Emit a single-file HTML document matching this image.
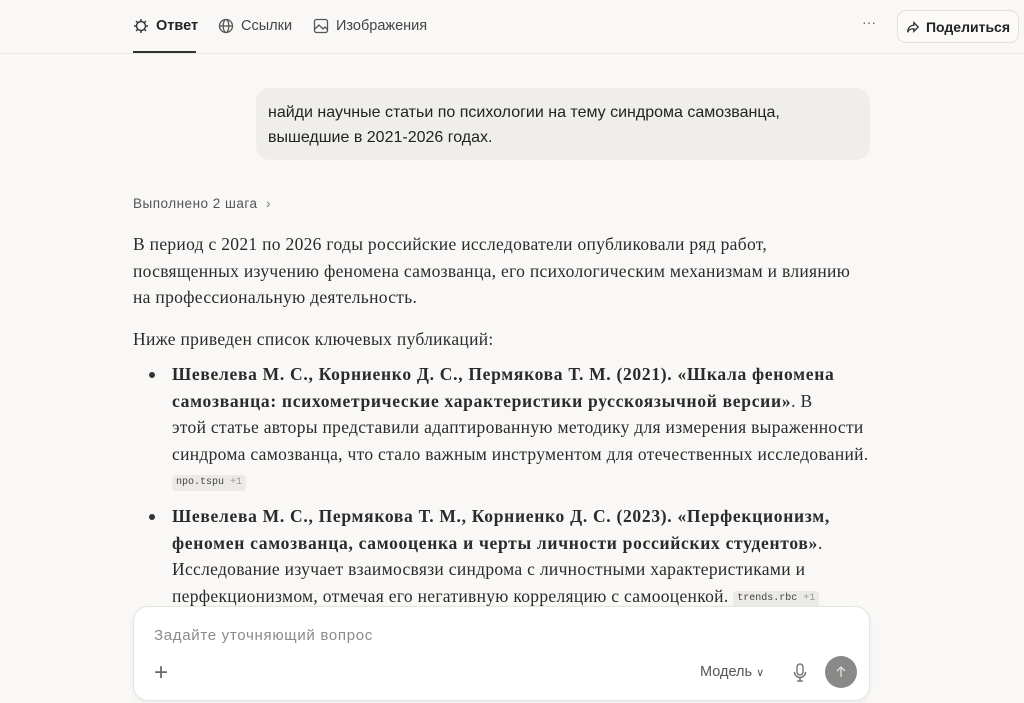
<!DOCTYPE html>
<html><head><meta charset="utf-8"><style>
*{margin:0;padding:0;box-sizing:border-box}
body{width:1024px;height:703px;overflow:hidden;background:#f9f8f6;font-family:"Liberation Sans",sans-serif;color:#222;position:relative}
.top{position:absolute;left:0;top:0;width:1024px;height:54px;border-bottom:1px solid #ebe9e4}
.tab{position:absolute;top:18px;font-size:14.5px;color:#444;display:flex;align-items:center;gap:7px}
.tab svg{width:16px;height:16px}
.ul{position:absolute;left:133px;top:51px;width:63px;height:2px;background:#333}
.share{position:absolute;left:897px;top:10px;width:122px;height:33px;border:1px solid #e2e0db;border-radius:9px;background:#fbfaf8;font-size:14px;font-weight:bold;color:#222;display:flex;align-items:center;justify-content:center;gap:6px}
.bubble{position:absolute;left:256px;top:88px;width:614px;height:72px;background:#efeeea;border-radius:14px;padding:12px 12px;font-size:16px;line-height:25px;color:#222}
.steps{position:absolute;left:133px;top:196px;font-size:13.5px;letter-spacing:0.5px;color:#555}
.txt{position:absolute;left:133px;font-family:"Liberation Serif",serif;font-size:17.5px;letter-spacing:0.3px;line-height:26.5px;color:#2a2a2a;white-space:nowrap}
.li{position:absolute;left:172px;font-family:"Liberation Serif",serif;font-size:17.5px;letter-spacing:0.3px;line-height:26.5px;color:#2a2a2a;white-space:nowrap}
.li b{letter-spacing:0.7px}
.dot{position:absolute;left:149px;width:6px;height:6px;border-radius:50%;background:#333}
.chip{display:inline-block;font-family:"Liberation Mono",monospace;font-size:10px;letter-spacing:0;line-height:16px;padding:0 4px;background:#eceae6;border-radius:4px;color:#444;vertical-align:2px}
.chip span{color:#999}
.input{position:absolute;left:133px;top:606px;width:737px;height:95px;background:#fff;border:1px solid #e6e4df;border-radius:15px;box-shadow:0 2px 6px rgba(0,0,0,.05)}
</style></head><body>
<div class="top">
<div class="tab" style="left:133px;color:#222;font-weight:bold"><svg viewBox="0 0 16 16" fill="none" stroke="#333" stroke-width="1.4"><circle cx="8" cy="8" r="4.5"/><path d="M8 1v3M8 12v3M1 8h3M12 8h3M3 3l2 2M11 11l2 2M13 3l-2 2M3 13l2-2"/></svg>Ответ</div>
<div class="tab" style="left:218px"><svg viewBox="0 0 16 16" fill="none" stroke="#555" stroke-width="1.3"><circle cx="8" cy="8" r="6.5"/><ellipse cx="8" cy="8" rx="2.8" ry="6.5"/><path d="M1.5 8h13"/></svg>Ссылки</div>
<div class="tab" style="left:313px"><svg viewBox="0 0 16 16" fill="none" stroke="#555" stroke-width="1.3"><rect x="1.5" y="1.5" width="13" height="13" rx="2"/><path d="M2 11l4-4 4 4 2-2 2.5 2.5"/></svg>Изображения</div>
<div class="ul"></div>
<div style="position:absolute;left:862px;top:14px;font-size:14px;color:#666">···</div>
<div class="share"><svg width="14" height="14" viewBox="0 0 16 16" fill="none" stroke="#333" stroke-width="1.5"><path d="M9 3l5 5-5 5V10C5 10 3 11 2 14c0-5 3-8 7-8z"/></svg>Поделиться</div>
</div>
<div class="bubble">найди научные статьи по психологии на тему синдрома самозванца,<br>вышедшие в 2021-2026 годах.</div>
<div class="steps">Выполнено 2 шага &nbsp;<span style="color:#777">›</span></div>
<div class="txt" style="top:231px">В период с 2021 по 2026 годы российские исследователи опубликовали ряд работ,<br>посвященных изучению феномена самозванца, его психологическим механизмам и влиянию<br>на профессиональную деятельность.</div>
<div class="txt" style="top:326px">Ниже приведен список ключевых публикаций:</div>
<div class="dot" style="top:372px"></div>
<div class="li" style="top:361px"><b>Шевелева М. С., Корниенко Д. С., Пермякова Т. М. (2021). «Шкала феномена</b><br><b>самозванца: психометрические характеристики русскоязычной версии»</b>. В<br>этой статье авторы представили адаптированную методику для измерения выраженности<br>синдрома самозванца, что стало важным инструментом для отечественных исследований.<br><span class="chip">npo.tspu <span>+1</span></span></div>
<div class="dot" style="top:514px"></div>
<div class="li" style="top:503px"><b>Шевелева М. С., Пермякова Т. М., Корниенко Д. С. (2023). «Перфекционизм,</b><br><b>феномен самозванца, самооценка и черты личности российских студентов»</b>.<br>Исследование изучает взаимосвязи синдрома с личностными характеристиками и<br>перфекционизмом, отмечая его негативную корреляцию с самооценкой. <span class="chip">trends.rbc <span>+1</span></span></div>
<div class="input">
<div style="position:absolute;left:20px;top:20px;font-size:15px;letter-spacing:0.7px;color:#8a8a8a">Задайте уточняющий вопрос</div>
<div style="position:absolute;left:20px;top:52px;font-size:24px;color:#666;font-weight:300">+</div>
<div style="position:absolute;left:566px;top:57px;font-size:14.5px;color:#555">Модель <span style="font-size:11px">∨</span></div>
<svg style="position:absolute;left:659px;top:56px" width="14" height="20" viewBox="0 0 14 20" fill="none" stroke="#666" stroke-width="1.3"><rect x="4" y="1" width="6" height="11" rx="3"/><path d="M1.5 9a5.5 5.5 0 0011 0M7 14.5V18M4 18h6"/></svg>
<div style="position:absolute;left:691px;top:49px;width:32px;height:32px;border-radius:50%;background:#8a8987"><svg width="32" height="32" viewBox="0 0 32 32" fill="none" stroke="#ddd" stroke-width="1.4"><path d="M16 21V11M12 15l4-4 4 4"/></svg></div>
</div>
</body></html>
